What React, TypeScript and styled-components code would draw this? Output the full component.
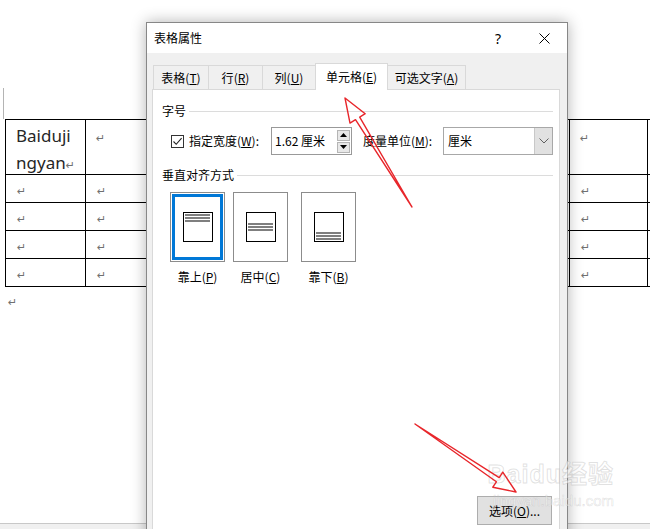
import React from "react";
import styled, { createGlobalStyle } from "styled-components";

const UI = `"Noto Sans CJK SC", "Microsoft YaHei", sans-serif`;

const Global = createGlobalStyle`
  html, body { margin: 0; padding: 0; width: 650px; height: 529px; overflow: hidden; background: #fff; }
  #root { width: 650px; height: 529px; }
`;

const Screen = styled.div`
  position: relative;
  width: 650px;
  height: 529px;
  overflow: hidden;
  display: flex;
  flex-direction: column;
  background: #fff;
`;

/* ---------- document behind the dialog ---------- */
const DocArea = styled.div`
  flex: 1;
  overflow: hidden;
  padding-top: 88px;
  box-sizing: border-box;
`;

const CornerMark = styled.div`
  width: 3px;
  height: 31px;
  border-right: 1px solid #b4b4b4;
`;

const COLS = [80, 81, 81, 81, 81, 80, 80, 78, 80];

const DocTable = styled.div`
  display: grid;
  grid-template-columns: ${COLS.map((c) => c + "px").join(" ")};
  grid-template-rows: 55px repeat(4, 28px);
  margin-left: 5px;
  width: max-content;
  border-left: 1px solid #000;
  border-top: 1px solid #000;
  font-family: "Noto Sans", sans-serif;
`;

const Cell = styled.div<{ $tall?: boolean }>`
  box-sizing: border-box;
  border-right: 1px solid #000;
  border-bottom: 1px solid #000;
  padding: ${(p) => (p.$tall ? "2px 0 0 10px" : "0 0 0 11px")};
  display: flex;
  align-items: ${(p) => (p.$tall ? "flex-start" : "center")};
  font-size: 17px;
  line-height: 27px;
  color: #262626;
  overflow: hidden;
`;

const ReturnMark = styled.span`
  font-family: "DejaVu Sans", sans-serif;
  font-size: 11px;
  color: #707070;
  line-height: 16px;
`;

const CellText = styled.div`
  line-height: 27px;
`;

const AfterPara = styled.div`
  margin-top: 6px;
  padding-left: 8px;
  line-height: 16px;
`;

const BottomBar = styled.div`
  height: 6px;
  box-sizing: border-box;
  border-top: 1px solid #c8c8c8;
  background: #f0f0f0;
  flex-shrink: 0;
`;

/* ---------- dialog ---------- */
const Dialog = styled.div`
  position: absolute;
  left: 146px;
  top: 22px;
  width: 422px;
  box-sizing: border-box;
  background: #f0f0f0;
  border: 1px solid #878787;
  box-shadow: 0 0 14px rgba(0, 0, 0, 0.3);
  display: flex;
  flex-direction: column;
  font-family: ${UI};
  font-size: 12px;
  color: #000;
  z-index: 5;
`;

const TitleBar = styled.div`
  height: 30px;
  background: #fff;
  display: flex;
  align-items: center;
  flex-shrink: 0;
`;

const Title = styled.div`
  flex: 1;
  padding-left: 7px;
  line-height: 16px;
`;

const TitleButton = styled.div`
  width: 46px;
  height: 30px;
  display: flex;
  align-items: center;
  justify-content: center;
  font-family: "Noto Sans", sans-serif;
  font-size: 14px;
`;

const Body = styled.div`
  display: flex;
  flex-direction: column;
  padding: 10px 7px 0 5px;
`;

const TabStrip = styled.div`
  display: flex;
  align-items: flex-end;
  height: 26px;
  padding-left: 1px;
  position: relative;
  z-index: 1;
`;

const Tab = styled.div<{ $w: number; $active?: boolean; $first?: boolean }>`
  position: relative;
  z-index: ${(p) => (p.$active ? 2 : 1)};
  width: ${(p) => p.$w}px;
  box-sizing: border-box;
  height: ${(p) => (p.$active ? 27 : 24)}px;
  margin-bottom: ${(p) => (p.$active ? -1 : 0)}px;
  margin-left: ${(p) => (p.$first ? 0 : -1)}px;
  border: 1px solid #d9d9d9;
  border-bottom: none;
  background: ${(p) => (p.$active ? "#fff" : "#f0f0f0")};
  display: flex;
  align-items: center;
  justify-content: center;
  padding-top: ${(p) => (p.$active ? 0 : 1)}px;
  line-height: 16px;
  white-space: nowrap;
`;

const Panel = styled.div`
  height: 460px;
  box-sizing: border-box;
  background: #fff;
  border: 1px solid #d9d9d9;
  display: flex;
  flex-direction: column;
  padding: 0 6px 0 9px;
`;

const GroupHeader = styled.div<{ $top: number }>`
  display: flex;
  align-items: center;
  margin-top: ${(p) => p.$top}px;
  line-height: 16px;
  white-space: nowrap;
`;

const GroupLine = styled.div`
  flex: 1;
  height: 1px;
  background: #dcdcdc;
  margin-left: 3px;
`;

const WidthRow = styled.div`
  display: flex;
  align-items: center;
  height: 28px;
  margin-top: 8px;
  padding-left: 9px;
  white-space: nowrap;
`;

const CheckBox = styled.div`
  width: 13px;
  height: 13px;
  box-sizing: border-box;
  border: 1px solid #333;
  display: flex;
  align-items: center;
  justify-content: center;
  flex-shrink: 0;
`;

const FieldLabel = styled.div<{ $w: number; $ml: number }>`
  width: ${(p) => p.$w}px;
  margin-left: ${(p) => p.$ml}px;
  line-height: 16px;
  flex-shrink: 0;
  overflow: hidden;
`;

const NumberBox = styled.div`
  width: 81px;
  height: 28px;
  box-sizing: border-box;
  border: 1px solid #999;
  display: flex;
  align-items: center;
  flex-shrink: 0;
`;

const FieldValue = styled.div`
  flex: 1;
  padding-left: 3px;
  line-height: 16px;
`;

const Spinner = styled.div`
  display: flex;
  flex-direction: column;
  gap: 1px;
  margin-right: 1px;
`;

const SpinButton = styled.div`
  width: 13px;
  height: 11px;
  box-sizing: border-box;
  border: 1px solid #b5b5b5;
  background: #e8e8e8;
  display: flex;
  align-items: center;
  justify-content: center;
`;

const SelectBox = styled.div`
  width: 110px;
  height: 28px;
  box-sizing: border-box;
  border: 1px solid #a8a8a8;
  display: flex;
  align-items: stretch;
  flex-shrink: 0;
`;

const SelectValue = styled.div`
  flex: 1;
  padding-left: 4px;
  display: flex;
  align-items: center;
  line-height: 16px;
`;

const DropButton = styled.div`
  width: 17px;
  background: #e1e1e1;
  border-left: 1px solid #c8c8c8;
  display: flex;
  align-items: center;
  justify-content: center;
`;

const OptionsRow = styled.div`
  display: flex;
  margin-top: 9px;
  padding-left: 8px;
`;

const Option = styled.div<{ $ml: number }>`
  display: flex;
  flex-direction: column;
  align-items: center;
  width: 55px;
  margin-left: ${(p) => p.$ml}px;
`;

const AlignBox = styled.div<{ $selected?: boolean }>`
  width: 55px;
  height: 70px;
  box-sizing: border-box;
  border: 1px solid #8c8c8c;
  background: #fff;
  display: flex;
  align-items: center;
  justify-content: center;
  box-shadow: ${(p) => (p.$selected ? "inset 0 0 0 1px #fff, inset 0 0 0 4px #0078d7" : "none")};
`;

const Glyph = styled.div<{ $pos: "flex-start" | "center" | "flex-end" }>`
  width: 30px;
  height: 30px;
  box-sizing: border-box;
  border: 1px solid #000;
  padding: 1px 2px 1px 1px;
  display: flex;
  flex-direction: column;
  justify-content: ${(p) => p.$pos};
  gap: 1px;
`;

const GlyphLine = styled.div`
  height: 2px;
  background: #7f7f7f;
`;

const OptionLabel = styled.div`
  margin-top: 7px;
  line-height: 16px;
  white-space: nowrap;
`;

const Footer = styled.div`
  margin-top: auto;
  margin-bottom: 23px;
  margin-right: 1px;
  align-self: flex-end;
`;

const PushButton = styled.div`
  width: 75px;
  height: 29px;
  box-sizing: border-box;
  background: #e1e1e1;
  border: 1px solid #adadad;
  display: flex;
  align-items: center;
  justify-content: center;
  line-height: 16px;
`;

/* ---------- annotations ---------- */
const Overlay = styled.svg`
  position: absolute;
  left: 0;
  top: 0;
  z-index: 10;
  pointer-events: none;
`;

const Watermark = styled.div`
  position: absolute;
  right: 36px;
  top: 458px;
  z-index: 9;
  pointer-events: none;
  font-family: "Liberation Sans", "Noto Sans CJK SC", sans-serif;
  color: rgba(255, 255, 255, 0.5);
  -webkit-text-stroke: 1px rgba(150, 150, 150, 0.28);
  display: flex;
  flex-direction: column;
  align-items: flex-end;
`;

const WatermarkTop = styled.div`
  font-size: 25px;
  font-weight: bold;
  line-height: 32px;
  letter-spacing: 1px;
`;

const WatermarkBottom = styled.div`
  font-size: 15px;
  line-height: 18px;
  margin-top: 2px;
  -webkit-text-stroke: 0.6px rgba(150, 150, 150, 0.28);
`;

const Ret = () => <ReturnMark>↵</ReturnMark>;

const tabs = [
  { w: 56, label: "表格", key: "T" },
  { w: 55, label: "行", key: "R" },
  { w: 54, label: "列", key: "U" },
  { w: 73, label: "单元格", key: "E", active: true },
  { w: 79, label: "可选文字", key: "A" },
];

const aligns: { label: string; key: string; pos: "flex-start" | "center" | "flex-end"; ml: number; selected?: boolean }[] = [
  { label: "靠上", key: "P", pos: "flex-start", ml: 0, selected: true },
  { label: "居中", key: "C", pos: "center", ml: 8 },
  { label: "靠下", key: "B", pos: "flex-end", ml: 13 },
];

export default function App() {
  const rows = [0, 1, 2, 3, 4];
  return (
    <Screen>
      <Global />
      <DocArea>
        <CornerMark />
        <DocTable>
          {rows.map((r) =>
            COLS.map((_, c) => (
              <Cell key={`${r}-${c}`} $tall={r === 0}>
                {r === 0 && c === 0 ? (
                  <CellText>
                    Baiduji
                    <br />
                    ngyan<Ret />
                  </CellText>
                ) : (
                  <CellText>
                    <Ret />
                  </CellText>
                )}
              </Cell>
            ))
          )}
        </DocTable>
        <AfterPara>
          <Ret />
        </AfterPara>
      </DocArea>
      <BottomBar />

      <Dialog>
        <TitleBar>
          <Title>表格属性</Title>
          <TitleButton>?</TitleButton>
          <TitleButton>
            <svg width="11" height="11" viewBox="0 0 11 11">
              <path d="M0.5 0.5 L10.5 10.5 M10.5 0.5 L0.5 10.5" stroke="#000" strokeWidth="1" fill="none" />
            </svg>
          </TitleButton>
        </TitleBar>
        <Body>
          <TabStrip>
            {tabs.map((t, i) => (
              <Tab key={t.key} $w={t.w} $active={t.active} $first={i === 0}>
                {t.label}(<u>{t.key}</u>)
              </Tab>
            ))}
          </TabStrip>
          <Panel>
            <GroupHeader $top={13}>
              字号
              <GroupLine />
            </GroupHeader>
            <WidthRow>
              <CheckBox>
                <svg width="11" height="11" viewBox="0 0 11 11">
                  <path d="M1.5 5.5 L4.2 8.3 L9.6 2.2" stroke="#222" strokeWidth="1.1" fill="none" />
                </svg>
              </CheckBox>
              <FieldLabel $w={82} $ml={5}>
                指定宽度(<u>W</u>):
              </FieldLabel>
              <NumberBox>
                <FieldValue>1.62 厘米</FieldValue>
                <Spinner>
                  <SpinButton>
                    <svg width="7" height="4" viewBox="0 0 7 4">
                      <polygon points="0,4 7,4 3.5,0" fill="#000" />
                    </svg>
                  </SpinButton>
                  <SpinButton>
                    <svg width="7" height="4" viewBox="0 0 7 4">
                      <polygon points="0,0 7,0 3.5,4" fill="#000" />
                    </svg>
                  </SpinButton>
                </Spinner>
              </NumberBox>
              <FieldLabel $w={80} $ml={11}>
                度量单位(<u>M</u>):
              </FieldLabel>
              <SelectBox>
                <SelectValue>厘米</SelectValue>
                <DropButton>
                  <svg width="10" height="6" viewBox="0 0 10 6">
                    <polyline points="0.5,0.5 5,5 9.5,0.5" stroke="#606060" strokeWidth="1" fill="none" />
                  </svg>
                </DropButton>
              </SelectBox>
            </WidthRow>
            <GroupHeader $top={12}>
              垂直对齐方式
              <GroupLine />
            </GroupHeader>
            <OptionsRow>
              {aligns.map((a) => (
                <Option key={a.key} $ml={a.ml}>
                  <AlignBox $selected={a.selected}>
                    <Glyph $pos={a.pos}>
                      <GlyphLine />
                      <GlyphLine />
                      <GlyphLine />
                    </Glyph>
                  </AlignBox>
                  <OptionLabel>
                    {a.label}(<u>{a.key}</u>)
                  </OptionLabel>
                </Option>
              ))}
            </OptionsRow>
            <Footer>
              <PushButton>
                选项(<u>O</u>)...
              </PushButton>
            </Footer>
          </Panel>
        </Body>
      </Dialog>

      <Watermark>
        <WatermarkTop>Baidu经验</WatermarkTop>
        <WatermarkBottom>jingyan.baidu.com</WatermarkBottom>
      </Watermark>

      <Overlay width="650" height="529" viewBox="0 0 650 529">
        <polygon
          points="345,98 365.2,113.7 359.7,117.1 412,207 355.5,119.7 350,123.1"
          fill="none"
          stroke="#e8262b"
          strokeWidth="1.4"
          strokeLinejoin="round"
        />
        <polygon
          points="516,492 502.8,472.2 499.2,477.6 415,424 496.4,481.8 492.8,487.2"
          fill="none"
          stroke="#e8262b"
          strokeWidth="1.4"
          strokeLinejoin="round"
        />
      </Overlay>
    </Screen>
  );
}
